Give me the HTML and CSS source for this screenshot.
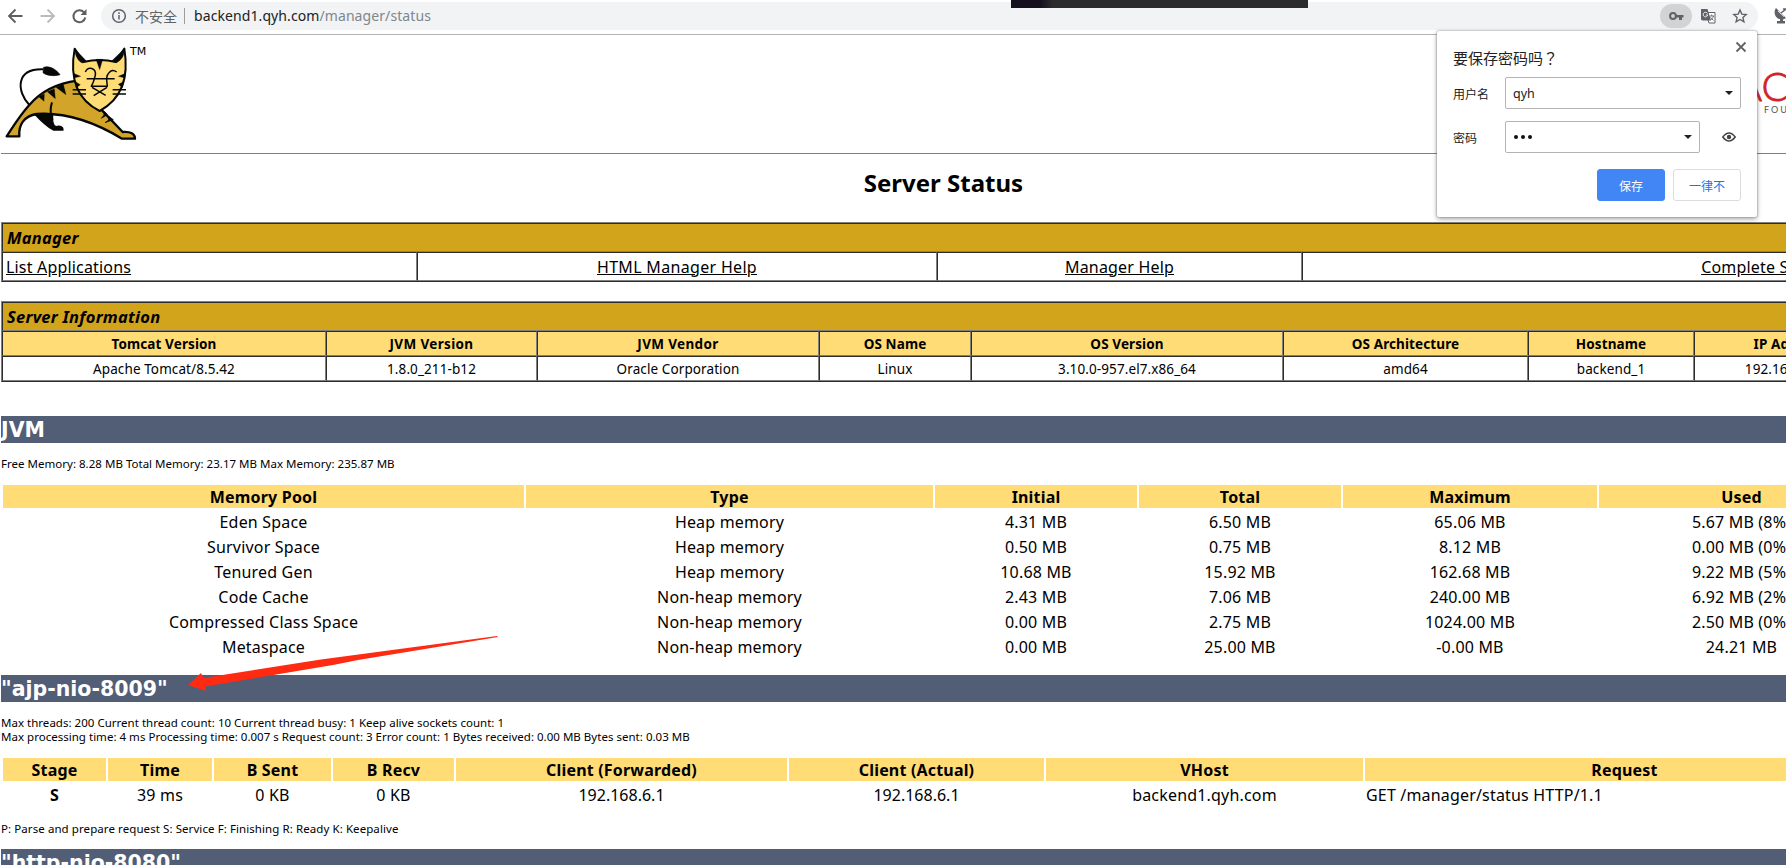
FILE: index.html
```html
<!DOCTYPE html>
<html lang="zh-CN">
<head>
<meta charset="utf-8">
<title>/manager</title>
<link rel="stylesheet" href="styles.css">
</head>
<body>
<div class="browser">
  <header class="toolbar">
    <svg class="nav" width="100" height="34" viewBox="0 0 100 34" fill="none" stroke-width="1.8">
      <path d="M22 16H9M15 9.500L8.500 16L15 22.500" stroke="#5b5e63"/>
      <path d="M40 16H53M47 9.500L53.500 16L47 22.500" stroke="#b9bbbe"/>
      <path d="M83.500 12.300A6 6 0 1 0 84.800 17.500" stroke="#5b5e63" stroke-width="2"/>
      <path d="M86 9V15H80Z" fill="#5b5e63"/>
    </svg>
    <div class="omnibox">
      <svg width="16" height="16" viewBox="0 0 16 16" fill="none" stroke="#5f6368" stroke-width="1.500"><circle cx="8" cy="8" r="6.300"/><path d="M8 7V11.500M8 4.300V5.900"/></svg>
      <span class="insecure">不安全</span><span class="sep"></span>
      <span class="url">backend1.qyh.com<span class="path">/manager/status</span></span>
      <span class="keypill"><svg width="15" height="10" viewBox="0 0 15 10"><circle cx="4" cy="5" r="2.900" fill="none" stroke="#5f6368" stroke-width="2"/><path d="M6.500 4H14.500V6.500H13V9H10V6.500H6.500Z" fill="#5f6368"/></svg></span>
      <svg class="translate" width="15" height="15" viewBox="0 0 15 15"><path d="M5 3.500H14V14H8L7 11" fill="#fff" stroke="#5f6368"/><path d="M0 0H6.500L10 11.500H1.500L0 10.500Z" fill="#5f6368"/><path d="M6.500 4.500A2.300 2.300 0 1 0 6.700 6H4.800" fill="none" stroke="#eee"/><path d="M8.500 7H13M10.700 5.500V7M12.500 7C12 9 11 10 9.800 11M9.500 8.300L12.500 11.500" fill="none" stroke="#5f6368" stroke-width=".9"/></svg>
      <svg class="star" width="16" height="16" viewBox="0 0 16 16"><path d="M8 2L9.800 6.100L14.200 6.500L10.900 9.400L11.900 13.800L8 11.500L4.100 13.800L5.100 9.400L1.800 6.500L6.200 6.100Z" fill="none" stroke="#5f6368" stroke-width="1.400"/></svg>
    </div>
    <svg class="dish" width="18" height="18" viewBox="0 0 18 18"><path d="M2 1C-1 5 1 12 7 12.500Q10 12.500 12 11Z" fill="#5f6368"/><path d="M4 4L10 9.500" stroke="#f5f5f5"/><path d="M7 6L12 2M9 2H13V5" stroke="#5f6368" stroke-width="1.500" fill="none"/><path d="M6 12H9V14H11V16.500H3V14H6Z" fill="#5f6368"/></svg>
    <span class="strip"></span>
  </header>

  <main class="page">
    <div class="banner">
      <svg class="cat" width="160" height="110" viewBox="0 0 480 330" fill="none" stroke="#060806" stroke-width="7" stroke-linejoin="round">
        <path d="M232 122C170 130 125 152 88 195C58 228 38 262 20 289H58C55 255 72 228 110 222C200 216 290 250 366 296H405C405 282 392 274 368 276L304 209Z" fill="#d2a52a"/>
        <path d="M104 222H158C156 245 160 258 168 260C182 256 190 262 189 270H160Q135 256 104 222Z" fill="#060806" stroke-width="4"/>
        <path d="M156 187C150 205 152 226 158 240" stroke-width="6"/>
        <path d="M88 195C50 155 45 85 130 88" stroke-width="6"/>
        <path d="M131 82C148 76 168 88 180 104C160 110 138 106 129 98Z" fill="#060806" stroke-width="2"/>
        <path d="M116 170L132 184L133 162ZM142 155L166 176L163 146ZM168 142L198 164L190 133Z" fill="#060806" stroke-width="1"/>
        <path d="M314 215L322 224L304 235L311 226ZM326 229L340 239L315 248L326 240Z" fill="#060806" stroke-width="2"/>
        <path d="M224 26L250 66Q300 54 347 66L373 26C384 92 378 170 299 213C224 176 210 104 224 26Z" fill="#ffdc76" stroke-width="6"/>
        <path d="M224 26L260 64L247 69C234 62 226 50 224 26ZM373 26L335 63L350 68C366 59 373 47 373 26ZM288 58H308L299 89ZM220 100L242 109L222 114ZM224 124L241 134L229 143ZM377 100L355 109L375 114ZM373 124L355 133L367 143Z" fill="#060806" stroke-width="1"/>
        <path d="M256 96C264 78 289 82 286 106L280 126L274 139H322C320 120 317 108 327 98Q337 86 350 96M260 116H344M276 142L317 166M321 142L281 167M218 149H258M218 162H258M338 149H378M338 162H378" stroke-width="4.500"/>
      </svg>
      <span class="tm">TM</span>
      <svg class="asf" width="60" height="50" viewBox="0 0 60 50"><text x="10" y="31" class="asf-red">AC</text><text x="38" y="43" class="asf-sub">FOUNDATION</text></svg>
    </div>
    <hr>
    <h1>Server Status</h1>

    <table class="grid">
      <colgroup><col class="m1"><col class="m2"><col class="m3"><col></colgroup>
      <tr class="title"><td colspan="4">Manager</td></tr>
      <tr class="links"><td class="left"><a>List Applications</a></td><td><a class="wide">HTML Manager Help</a></td><td><a>Manager Help</a></td><td class="right"><a>Complete Server Status</a></td></tr>
    </table>

    <table class="grid info">
      <colgroup><col class="s1"><col class="s2"><col class="s3"><col class="s4"><col class="s5"><col class="s6"><col class="s7"><col></colgroup>
      <tr class="title"><td colspan="8">Server Information</td></tr>
      <tr class="head"><th>Tomcat Version</th><th class="jvm">JVM Version</th><th class="jvm">JVM Vendor</th><th>OS Name</th><th>OS Version</th><th>OS Architecture</th><th>Hostname</th><th>IP Address</th></tr>
      <tr class="data"><td>Apache Tomcat/8.5.42</td><td>1.8.0_211-b12</td><td>Oracle Corporation</td><td>Linux</td><td>3.10.0-957.el7.x86_64</td><td>amd64</td><td>backend_1</td><td>192.168.6.129</td></tr>
    </table>

    <h2>JVM</h2>
    <p>Free Memory: 8.28 MB Total Memory: 23.17 MB Max Memory: 235.87 MB</p>
    <table class="plain">
      <colgroup><col class="p1"><col class="p2"><col class="p3"><col class="p4"><col class="p5"><col></colgroup>
      <tr><th>Memory Pool</th><th>Type</th><th>Initial</th><th>Total</th><th>Maximum</th><th>Used</th></tr>
      <tr><td>Eden Space</td><td>Heap memory</td><td>4.31 MB</td><td>6.50 MB</td><td>65.06 MB</td><td>5.67 MB (8%)</td></tr>
      <tr><td>Survivor Space</td><td>Heap memory</td><td>0.50 MB</td><td>0.75 MB</td><td>8.12 MB</td><td>0.00 MB (0%)</td></tr>
      <tr><td>Tenured Gen</td><td>Heap memory</td><td>10.68 MB</td><td>15.92 MB</td><td>162.68 MB</td><td>9.22 MB (5%)</td></tr>
      <tr><td>Code Cache</td><td>Non-heap memory</td><td>2.43 MB</td><td>7.06 MB</td><td>240.00 MB</td><td>6.92 MB (2%)</td></tr>
      <tr><td>Compressed Class Space</td><td>Non-heap memory</td><td>0.00 MB</td><td>2.75 MB</td><td>1024.00 MB</td><td>2.50 MB (0%)</td></tr>
      <tr><td>Metaspace</td><td>Non-heap memory</td><td>0.00 MB</td><td>25.00 MB</td><td>-0.00 MB</td><td>24.21 MB</td></tr>
    </table>

    <h2 class="ajp">"ajp-nio-8009"</h2>
    <p>Max threads: 200 Current thread count: 10 Current thread busy: 1 Keep alive sockets count: 1<br>Max processing time: 4 ms Processing time: 0.007 s Request count: 3 Error count: 1 Bytes received: 0.00 MB Bytes sent: 0.03 MB</p>
    <table class="plain">
      <colgroup><col class="c1"><col class="c2"><col class="c3"><col class="c4"><col class="c5"><col class="c6"><col class="c7"><col></colgroup>
      <tr><th>Stage</th><th>Time</th><th>B Sent</th><th>B Recv</th><th>Client (Forwarded)</th><th>Client (Actual)</th><th>VHost</th><th>Request</th></tr>
      <tr><td><b>S</b></td><td>39 ms</td><td>0 KB</td><td>0 KB</td><td class="ip">192.168.6.1</td><td class="ip">192.168.6.1</td><td>backend1.qyh.com</td><td class="left">GET /manager/status HTTP/1.1</td></tr>
    </table>
    <p class="legend">P: Parse and prepare request S: Service F: Finishing R: Ready K: Keepalive</p>
    <h2 class="http">"http-nio-8080"</h2>
  </main>

  <svg class="arrow" width="312" height="58" viewBox="187 635 312 58"><path d="M188 685L201 673L203.500 678L321 659.500L497 636L498 637L358 660L333 665L205 686.500L206 691Z" fill="#ff2a12"/></svg>

  <aside class="popup">
    <svg class="close" width="12" height="12" viewBox="0 0 12 12"><path d="M1.500 1.500L10.500 10.500M10.500 1.500L1.500 10.500" stroke="#5f6368" stroke-width="1.800"/></svg>
    <div class="ptitle">要保存密码吗<span class="mark" lang="zh-TW">？</span></div>
    <div class="row"><label>用户名</label><div class="field"><span>qyh</span><i></i></div></div>
    <div class="row"><label>密码</label><div class="field short"><span class="dots"><b></b><b></b><b></b></span><i></i></div>
      <svg class="eye" width="14" height="10" viewBox="0 0 14 10"><path d="M.8 5Q7-3 13.200 5Q7 13 .8 5Z" fill="none" stroke="#444" stroke-width="1.500"/><circle cx="7" cy="5" r="2.200" fill="#444"/></svg></div>
    <div class="actions"><button class="save">保存</button><button>一律不</button></div>
  </aside>
</div>
</body>
</html>
```
FILE: styles.css
```css
* { box-sizing: border-box; }
body { margin: 0; overflow: hidden; background: #fff; color: #000; font-family: "Noto Sans", "Noto Sans CJK SC", sans-serif; font-size: 16px; }
.browser { position: relative; width: 1786px; height: 865px; overflow: hidden; }
.toolbar { position: relative; display: flex; height: 35px; border-bottom: 1px solid #b4b4b4; }
.nav { flex: none; width: 101px; }
.omnibox { display: flex; align-items: center; flex: none; width: 1657px; height: 28px; margin-top: 2px; padding-left: 10px; border-radius: 14px; background: #f1f3f4; }
.insecure { margin-left: 8px; width: 42px; font: 14px/28px "Noto Sans CJK SC", sans-serif; color: #5f6368; }
.sep { width: 1px; height: 16px; margin: 0 9px 0 7px; background: #9a9da1; }
.url { flex: 1; font-size: 14px; line-height: 28px; letter-spacing: .09px; color: #202124; }
.path { color: #80868b; }
.keypill { display: flex; align-items: center; justify-content: center; width: 32px; height: 24px; border-radius: 12px; background: #d2d3d3; }
.translate { margin-left: 9px; }
.star { margin: 0 10px 0 16px; }
.dish { flex: none; margin: 7px 0 0 16px; }
.strip { position: absolute; left: 1011px; top: 0; width: 297px; height: 8px; background: linear-gradient(90deg, #16101e 0 30px, #2b2b2e 42px); }

.page { width: 1885px; margin-left: 1px; }
.banner { position: relative; display: flex; height: 118px; padding-top: 5px; }
.cat { flex: none; margin-left: -1px; }
.tm { position: absolute; left: 129px; top: 10px; font: 11px/14px "DejaVu Sans", sans-serif; }
.asf { position: absolute; left: 1725px; top: 35px; }
.asf-red { font: 300 40px Lato, sans-serif; fill: #d22128; stroke: #d22128; stroke-width: .8; }
.asf-sub { font: 9px Lato, sans-serif; letter-spacing: 2px; fill: #555; }
hr { height: 1px; margin: 0; border: 0; background: #808080; }
h1 { margin: 0; height: 68px; padding-top: 12px; font-size: 24px; line-height: 34px; text-align: center; }

.grid { width: 1885px; table-layout: fixed; border: 1px solid #808080; border-right-color: #2c2c2c; border-bottom-color: #2c2c2c; border-spacing: 0; }
.grid td, .grid th { padding: 0 3px; border: 1px solid #2c2c2c; border-right-color: #808080; border-bottom-color: #808080; text-align: center; white-space: nowrap; overflow: hidden; }
.grid .title td { height: 29px; padding-left: 4px; background: #d2a41c; text-align: left; font-weight: bold; font-style: italic; font-size: 16.500px; line-height: 26px; letter-spacing: .25px; }
.links td { height: 29px; line-height: 26px; letter-spacing: .18px; }
.grid .left { text-align: left; }
.grid .right { text-align: right; }
.links a { text-decoration: underline; }
.links .wide { letter-spacing: .32px; }
.info { margin-top: 19px; }
.grid.info th, .grid.info .data td { height: 25px; font-size: 13.500px; line-height: 22px; letter-spacing: .1px; }
.grid.info th.jvm { letter-spacing: .35px; }
.info th { background: #ffdc75; }
.m1 { width: 415px; } .m2 { width: 520px; } .m3 { width: 365px; }
.s1 { width: 324px; } .s2 { width: 211px; } .s3 { width: 282px; } .s4 { width: 152px; } .s5 { width: 312px; } .s6 { width: 245px; } .s7 { width: 166px; }

h2 { height: 27px; margin: 34px 0 0; background: #525d76; color: #fff; font: bold 20.500px/28px "DejaVu Sans", sans-serif; white-space: nowrap; }
.ajp { margin-top: 15px; }
p { margin: 0; padding: 14px 0 12px; font-size: 11.500px; line-height: 14px; letter-spacing: .02px; }
.plain { width: 1885px; table-layout: fixed; border-spacing: 2px; }
.plain td, .plain th { height: 23px; padding: 0 1px; line-height: 22px; letter-spacing: .18px; text-align: center; white-space: nowrap; }
.plain th { background: #ffdc75; }
.plain .left { text-align: left; }
.plain .ip { letter-spacing: 0; }
.p1 { width: 521px; } .p2 { width: 407px; } .p3 { width: 202px; } .p4 { width: 202px; } .p5 { width: 254px; }
.c1 { width: 103px; } .c2 { width: 104px; } .c3 { width: 117px; } .c4 { width: 121px; } .c5 { width: 331px; } .c6 { width: 255px; } .c7 { width: 317px; }
.legend { padding-bottom: 13px; letter-spacing: .08px; }
.http { margin-top: 0; }
.arrow { position: absolute; left: 187px; top: 635px; }

.popup { position: absolute; left: 1437px; top: 31px; width: 320px; height: 186px; padding: 0 16px; background: #fff; border-radius: 2px; box-shadow: 0 0 2px #777, 0 2px 5px rgba(0,0,0,.35); font-family: "Noto Sans CJK SC", sans-serif; color: #202124; }
.close { position: absolute; right: 10px; top: 10px; }
.ptitle { padding-top: 14px; height: 46px; font-size: 15px; line-height: 26px; }
.mark { font-family: "Noto Sans CJK TC", sans-serif; }
.row { display: flex; align-items: center; height: 32px; margin-bottom: 12px; }
.row label { width: 52px; font-size: 12px; }
.field { display: flex; align-items: center; justify-content: space-between; width: 236px; height: 32px; padding: 0 7px; border: 1px solid #b4b4b4; border-radius: 2px; font: 12.500px "Noto Sans", sans-serif; }
.field i { border: 4px solid transparent; border-top-color: #202124; border-bottom: 0; }
.short { width: 195px; }
.dots { display: flex; gap: 3px; padding-left: 1px; }
.dots b { width: 4px; height: 4px; border-radius: 50%; background: #111; }
.eye { margin-left: 22px; }
.actions { display: flex; gap: 8px; justify-content: flex-end; padding-top: 4px; }
button { width: 68px; height: 32px; padding: 0; border: 1px solid #dadce0; border-radius: 3px; background: #fff; color: #1a73e8; font: 12px "Noto Sans CJK SC", sans-serif; }
.save { background: #4285f4; border-color: #4285f4; color: #fff; }
```
